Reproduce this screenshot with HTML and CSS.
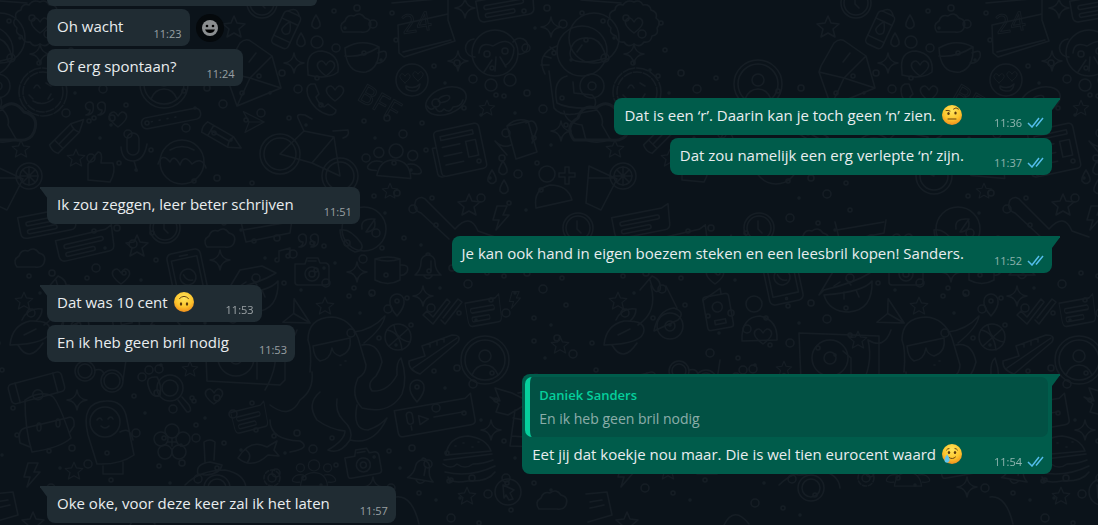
FILE: index.html
```html
<!DOCTYPE html>
<html lang="nl">
<head>
    <meta charset="UTF-8">
    <meta name="viewport" content="width=device-width, initial-scale=1.0">
    <title>Chat</title>
    <link rel="stylesheet" href="styles.css">
</head>
<body>
    <!-- Wallpaper -->
    <svg class="wallpaper" aria-hidden="true">
        <defs>
            <path id="star" d="M0-11L3-4L11-3L5 2L7 10L0 6L-7 10L-5 2L-11-3L-3-4Z"/>
            <path id="spark" d="M0-10Q1-1 10 0Q1 1 0 10Q-1 1-10 0Q-1-1 0-10Z"/>
            <path id="heart" d="M0 8Q-11 0-8-5Q-4-10 0-3Q4-10 8-5Q11 0 0 8Z"/>
            <path id="drop" d="M0-7Q5 1 4 4Q0 9-4 4Q-5 1 0-7Z"/>
            <path id="cloud" d="M-13 9Q-18 2-11-2Q-9-9-2-7Q4-12 9-5Q17-3 14 5Q12 10 5 9Z"/>
            <path id="bolt" d="M-4-12L6-12L2-3L8-3L-5 12L-2 2L-8 2Z"/>
            <path id="quotes" d="M-4-5a4 4 0 1 0-3 6q0 4-4 5q9 0 7-11M8-5a4 4 0 1 0-3 6q0 4-4 5q9 0 7-11"/>
            <path id="chat" d="M-29-10H22L29-13L27 6Q27 12 21 12H-23Q-29 12-29 6ZM-20-4H16a2 2 0 0 1 0 4H-20a2 2 0 0 1 0-4M-20 4H6a2 2 0 0 1 0 4H-20a2 2 0 0 1 0-4"/>
            <g id="camera">
                <path d="M-17-8H-7L-5-14H6L8-9H14Q17-8 17-5V10Q17 13 13 13H-14Q-17 13-17 10ZM-4-11H4"/>
                <circle cy="2" r="7"/><circle cy="2" r="3"/><circle cx="12" cy="-4" r="1"/>
            </g>
            <g id="avatar">
                <circle r="24"/><circle r="20"/><circle cy="-4" r="6"/>
                <path d="M-13 15Q-9 5 0 5T13 15"/>
            </g>
            <g id="clock"><circle r="15"/><circle r="12"/><path d="M-1-7V1L3 5"/></g>
            <g id="group">
                <circle cy="-12" r="7"/><circle cx="-17" cy="-9" r="5"/><circle cx="17" cy="-9" r="5"/>
                <path d="M-17 14Q-15-3 0-3T17 14ZM-18 9Q-30 10-26 4Q-22-2-13 0M18 9Q30 10 26 4Q22-2 13 0"/>
            </g>
            <path id="pencil" d="M-20-6H10L22 0L10 6H-20Q-23 0-20-6M-13-6V6M10-6Q7 0 10 6M-13 0H8"/>
            <path id="pin" d="M0 11Q-8 2-7-4A7 7 0 0 1 7-4Q8 2 0 11M2-4A2 2 0 1 1-2-4A2 2 0 1 1 2-4"/>
            <path id="bell" d="M-13 10Q-7 5-7-3A7 7 0 0 1 7-3Q7 5 13 10ZM-4 11Q0 16 4 11M-2-10a2 2 0 1 1 4 0M3-4V5"/>
            <path id="mug" d="M-13-11Q0-15 12-11V10Q0 17-13 10ZM-13-11Q0-7 12-11M12-5Q22-6 19 2Q16 6 12 5"/>
            <path id="plane" d="M-12-13L14 0L-10 13L-5 0ZM-5 0H14"/>
            <path id="ticks" d="M-18 2L-14-2L-8 4L6-14L9-11L-8 11ZM2 5L17-14L21-11L4 11L0 7"/>
            <path id="phone" d="M-12-15Q-18-13-15-3Q-9 12 6 16Q13 16 13 11L5 5L1 8Q-5 4-7-2L-4-5L-8-15Z"/>
            <g id="tablet">
                <rect x="-17" y="-26" width="34" height="52" rx="5"/><rect x="-13" y="-19" width="26" height="37"/>
                <circle r="8"/><path d="M-4-3Q-2 4 4 4M-4-22H4"/><circle cy="22" r="1"/>
            </g>
            <g id="rings">
                <circle cx="4" cy="6" r="2"/><circle cx="27" cy="3" r="3"/><circle cx="15" cy="23" r="1"/>
                <circle cx="43" cy="19" r="4"/><circle cx="62" cy="8" r="2"/><circle cx="66" cy="35" r="2"/>
                <circle cx="6" cy="43" r="4"/><circle cx="34" cy="48" r="2"/><circle cx="51" cy="55" r="1"/>
            </g>
            <g id="tile">
                <!-- scattered dots -->
                <use href="#rings" x="5" y="15"/><use href="#rings" x="60" y="70"/><use href="#rings" x="85" y="115"/>
                <use href="#rings" x="180" y="85"/><use href="#rings" x="255" y="70"/><use href="#rings" x="330" y="5"/>
                <use href="#rings" x="430" y="60"/><use href="#rings" x="500" y="90"/><use href="#rings" x="520" y="5"/>
                <use href="#rings" x="360" y="115"/><use href="#rings" x="475" y="155"/><use href="#rings" x="370" y="190"/>
                <use href="#rings" x="190" y="175"/><use href="#rings" x="90" y="225"/><use href="#rings" x="250" y="235"/>
                <use href="#rings" x="320" y="240"/><use href="#rings" x="25" y="270"/><use href="#rings" x="110" y="310"/>
                <use href="#rings" x="190" y="300"/><use href="#rings" x="345" y="290"/><use href="#rings" x="425" y="265"/>
                <use href="#rings" x="500" y="270"/><use href="#rings" x="530" y="335"/><use href="#rings" x="430" y="365"/>
                <use href="#rings" x="130" y="390"/><use href="#rings" x="190" y="395"/><use href="#rings" x="45" y="445"/>
                <use href="#rings" x="155" y="460"/><use href="#rings" x="385" y="445"/><use href="#rings" x="500" y="435"/>
                <use href="#rings" x="545" y="400"/><use href="#rings" x="445" y="475"/><use href="#rings" x="270" y="430"/>
                <!-- top band -->
                <path d="M40 2q6-3 9 3q7-1 8 5q7 2 5 8q6 4 1 10q2 7-5 8q-1 7-8 6q-4 6-10 2q-6 4-10-2q-7 1-8-6q-7-2-5-8q-6-5-1-10q-2-6 5-8q1-7 8-5q4-6 11-3Z"/>
                <use href="#heart" x="40" y="25"/>
                <path d="M-13 0L27 3M0 13A20 20 0 0 1 0 63M0 13A25 25 0 0 0 0 63"/>
                <use href="#spark" x="40" y="54"/><use href="#clock" x="262" y="3"/><use href="#star" x="234" y="27"/>
                <g transform="translate(287 28) rotate(25)"><rect x="-9" y="-16" width="18" height="36" rx="4"/><path d="M-9-7H9M-9 12H9M-6-16Q0-24 6-16"/><use href="#drop"/></g>
                <use href="#drop" x="316" y="22"/><use href="#drop" x="301" y="40"/><circle cx="317" cy="42" r="6"/>
                <path d="M308 72Q305 51 322 51Q340 54 338 72Q328 80 308 75Z"/><use href="#heart" x="326" y="68"/>
                <use href="#cloud" x="356" y="23"/>
                <path d="M345 48Q362 38 379 47Q380 68 366 72Q346 74 345 48ZM378 53Q388 48 386 57Q383 64 376 63M345 56Q362 58 379 47"/>
                <path d="M392 3L448-2V20L455 41L404 57L399 53L398 25L448 14M403 52L451 40"/>
                <text x="403" y="34" transform="rotate(-9 403 34)">24</text>
                <use href="#spark" x="465" y="8"/>
                <use href="#chat" transform="translate(506 6) rotate(-10)"/><use href="#spark" x="551" y="27"/>
                <!-- second band -->
                <g transform="translate(43 92)"><circle r="24" stroke-dasharray="12 2"/><circle r="20" stroke-dasharray="8 2"/><path d="M-9-4q3-6 6 0M3-9l5 3M8 2l-3 5M-10 9q10 6 20-2M-14 3l4 4"/></g>
                <use href="#cloud" transform="translate(6 122) scale(2)"/>
                <use href="#quotes" x="97" y="109"/><use href="#heart" x="118" y="119"/>
                <use href="#pencil" transform="translate(68 135) rotate(-45)"/>
                <path d="M127 139a6 6 0 0 1 12 0v10a6 6 0 0 1-12 0ZM121 147Q122 161 133 161T147 144M134 161L137 171"/>
                <use href="#avatar" x="164" y="84"/>
                <g transform="translate(171 118) rotate(-11)"><rect x="-30" y="-5" width="60" height="11" rx="5"/><path d="M-20 0h1M-12 0h1M-4 0h1M4 0h1"/></g>
                <use href="#pencil" transform="translate(222 137) rotate(30)"/>
                <path d="M227 66L240 43Q246 37 252 42L272 56L281 88L237 106L225 72ZM225 72L250 78L272 56M250 78L281 88M250 78L237 106M249 62L256 53"/>
                <use href="#spark" x="294" y="63"/><use href="#phone" x="323" y="99"/><use href="#heart" x="335" y="93"/>
                <use href="#plane" transform="translate(253 122) scale(.8)"/>
                <circle cx="280" cy="154" r="20"/><circle cx="280" cy="154" r="16"/><circle cx="340" cy="176" r="18"/><circle cx="340" cy="176" r="14"/>
                <path d="M280 154L304 131L334 137L312 163L280 154M304 131L298 118Q296 113 305 115L312 119M312 163L340 176L334 137M333 131L348 130Q350 136 343 138"/>
                <use href="#star" transform="translate(21 149) scale(.8)"/><use href="#star" transform="translate(76 158) scale(.8)"/>
                <circle cx="182" cy="162" r="22"/><path d="M158 164q4-12 12-2q4-9 10 3q4-12 12-1q10-8 14 4M170 150q12-7 24 0"/>
                <path d="M88 180V164L98 152Q103 152 101 163H113Q116 172 110 182Z"/>
                <circle cx="412" cy="80" r="16"/><use href="#heart" transform="translate(405 78) scale(.6)"/><use href="#heart" transform="translate(418 76) scale(.6)"/><path d="M406 86Q414 90 420 84Q419 92 412 91T406 86"/>
                <use href="#spark" x="458" y="61"/>
                <ellipse cx="446" cy="101" rx="21" ry="13" transform="rotate(-20 446 101)"/><ellipse cx="444" cy="99" rx="6" ry="3" transform="rotate(-20 444 99)"/><path d="M427 106q4 6 8 1q4 8 9 2q6 5 9-2q8 0 10-7"/>
                <circle cx="495" cy="53" r="23"/><path d="M475 57a9 9 0 1 1-1-18M513 42a8 8 0 1 1 5 12M479 53Q480 41 493 46Q508 36 514 48Q514 60 505 66M492 60l-8 12M496 57l-1 14M500 57l6 10"/><circle cx="487" cy="54" r="3"/><circle cx="505" cy="51" r="3"/>
                <circle cx="491" cy="85" r="6"/><circle cx="510" cy="80" r="6"/>
                <text x="356" y="99" transform="rotate(30 356 99)">BFF</text>
                <use href="#star" transform="translate(487 108) scale(.7)"/>
                <circle cx="582" cy="51" r="25"/><path d="M570 53Q572 37 588 38Q602 38 606 58Q588 64 576 61Q570 60 570 53M577 52l5-7M557 46Q535 54 545 74M555 51l-5-4M551 58l-7-2M549 65h-8M549 71L554 108Q560 116 575 114L597 110Q604 118 602 125L610 139Q598 145 586 140L582 125Q566 123 564 111M567 76Q552 80 557 103Q567 109 594 108Q598 100 592 95L574 93L573 82"/>
                <circle cx="592" cy="86" r="12"/><circle cx="592" cy="86" r="4"/>
                <!-- middle band -->
                <g transform="translate(459 149) rotate(-12)"><rect x="-22" y="-22" width="46" height="46" rx="4"/><path d="M-22-6H-26V20Q-26 24-20 24M-16-16H17v4H-16ZM-16-5H2M-16 4H2M-16 13H2M8-6H18V10H8Z"/></g>
                <path d="M507 126L528 121L537 152L516 159ZM507 126Q516 117 528 121M511 145Q503 149 495 141L507 155M526 123Q535 117 537 129L532 143"/>
                <use href="#spark" x="561" y="131"/><use href="#group" transform="translate(395 163) rotate(5)"/>
                <use href="#star" transform="translate(390 191) scale(.7)"/><use href="#star" x="469" y="205"/>
                <use href="#drop" x="492" y="177"/><use href="#drop" x="504" y="187"/><use href="#drop" x="503" y="168"/>
                <circle cx="547" cy="174" r="8"/><path d="M536 208Q533 189 550 185Q568 185 572 200ZM565 167v6h-6v4h6v7h4v-7h6v-4h-6v-6Z"/>
                <use href="#bolt" x="501" y="218"/>
                <path d="M416 200Q422 194 428 202L455 229Q470 212 478 231L495 237M416 200Q412 210 421 213L449 239"/>
                <g transform="translate(3 188)"><path d="M-8-22L20-9L4 22L-11 15ZM-9-10H17"/><circle cx="26" cy="-12" r="13"/><circle cx="26" cy="-12" r="9"/><path d="M26-21V-3M17-12H35M20-18L32-6M32-18L20-6"/></g>
                <use href="#clock" x="578" y="228"/>
                <use href="#chat" transform="translate(48 222) rotate(-11)"/><use href="#chat" transform="translate(86 244) rotate(-13)"/>
                <use href="#cloud" x="30" y="258"/><use href="#clock" x="165" y="228"/><use href="#cloud" x="220" y="238"/>
                <use href="#star" x="137" y="246"/><use href="#spark" x="220" y="260"/><use href="#heart" x="121" y="276"/>
                <use href="#tablet" transform="translate(188 277) rotate(-12)"/>
                <path d="M241 222L246 242L290 233L292 220M243 230L290 222M225 295L240 270L262 266L276 273Q260 283 230 290ZM230 295Q270 292 278 281Q279 310 255 312Q235 312 230 295M240 286l6-4M252 279l5 6M250 292v7M262 290l3 7"/>
                <use href="#quotes" x="310" y="241"/><path d="M279 260V251L290 248V256M279 260a2 2 0 1 1-2-2M290 256a2 2 0 1 1-2-2"/>
                <circle cx="364" cy="229" r="22"/><path d="M340 230Q350 228 361 243Q365 250 355 252Q341 246 340 230M362 229Q360 218 374 219Q378 231 366 232L375 219"/>
                <use href="#camera" x="312" y="272"/><use href="#spark" x="357" y="272"/><use href="#mug" x="388" y="270"/>
                <use href="#bell" x="428" y="265"/><use href="#star" transform="translate(24 301) scale(.8)"/>
                <!-- scooter, passport, turntable -->
                <path d="M10 345Q12 325 30 321Q50 320 50 330Q50 344 10 345M22 320Q28 307 42 309Q42 316 36 321M44 325Q64 312 57 286M72 286L83 308M60 331Q64 310 80 308Q92 312 84 320L60 331M24 335L36 329"/>
                <circle cx="76" cy="326" r="13"/><circle cx="76" cy="326" r="5"/><path d="M18 345Q29 364 43 343M46 290L58 276Q68 280 66 290Q60 296 56 280"/>
                <g transform="translate(124 311) rotate(-10)"><rect x="-13" y="-16" width="26" height="34" rx="3"/><path d="M-13-13L6-22V-16M-5 9H6v4H-5Z"/><circle cy="-4" r="5"/></g>
                <circle cx="160" cy="304" r="8"/><path d="M148 341Q147 317 166 316Q184 320 183 340Z"/><use href="#heart" x="169" y="336"/>
                <path d="M205 333L285 336V380L280 385L207 381Z"/><circle cx="236" cy="358" r="18"/><circle cx="236" cy="358" r="6"/><path d="M249 351L257 358V379"/>
                <use href="#star" transform="translate(264 340) scale(.8)"/><use href="#plane" transform="translate(298 316) rotate(30)"/><use href="#star" transform="translate(325 306) scale(.8)"/>
                <use href="#spark" x="423" y="296"/><use href="#pin" x="397" y="305"/><use href="#ticks" x="441" y="313"/>
                <use href="#chat" transform="translate(484 311) rotate(-10) scale(.6 1.1)"/><use href="#bolt" transform="translate(515 300) scale(.7)"/>
                <!-- octopus -->
                <path d="M310 372Q312 350 308 340Q308 318 332 317Q350 318 358 338L366 365M354 332Q372 330 385 316Q383 328 364 343M362 345Q378 342 382 362Q380 370 376 376Q366 384 372 391Q388 392 397 375Q396 362 401 358Q408 378 402 394Q390 415 362 408Q350 396 358 378Q366 374 366 365"/>
                <path d="M313 346L350 338Q352 352 340 356Q333 354 332 348Q330 360 320 361Q314 358 313 346M320 392Q306 404 317 420Q331 430 345 431Q345 440 328 450Q340 455 350 440Q354 430 343 420Q335 412 337 399M270 405Q290 420 300 400Q314 390 312 372M270 420Q270 440 300 441Q312 448 290 452M357 405Q352 430 368 430Q380 426 387 418Q374 446 350 440M265 390Q280 365 274 340Q290 350 297 330M345 361h1M340 365h1"/>
                <circle cx="398" cy="337" r="13"/><path d="M387 330Q400 332 402 350M394 325Q396 340 410 342M389 346L408 329"/>
                <path d="M409 361L425 356L422 346L452 335Q462 335 458 342L420 374Q408 370 409 361ZM413 368L457 338M430 343v4M437 341v4M444 338v4"/>
                <use href="#avatar" x="485" y="360"/><use href="#pin" transform="translate(417 391)"/>
                <g transform="translate(434 417) rotate(-10)"><path d="M-38-13H34L40-17V10Q40 14 35 14H-34Q-38 14-38 9ZM-27-6a3 3 0 0 1 6 0v6a3 3 0 0 1-6 0ZM-24 5V9M-15-4L-6 1L-15 5ZM0 0H31"/></g>
                <path d="M490 397L500 401L495 388L512 393L530 402L508 415L496 412L499 404ZM518 393L530 391L540 447L510 446L515 410M513 418L535 422M512 436L538 438"/>
                <use href="#spark" x="491" y="430"/><use href="#star" transform="translate(560 345) scale(.8)"/>
                <!-- bottom band -->
                <g transform="translate(36 388) rotate(-15)"><rect x="-27" y="-10" width="55" height="20" rx="4"/><path d="M-19-10V10M20-10V10"/><circle cy="7" r="5"/></g>
                <path d="M25 400Q40 390 52 396Q58 400 71 438Q60 448 32 452Q25 430 25 400M25 428L67 418M25 428Q17 430 20 443L30 447M67 418Q75 415 74 426L70 432"/><ellipse cx="39" cy="427" rx="2" ry="4"/><ellipse cx="58" cy="423" rx="2" ry="4"/>
                <use href="#spark" x="77" y="400"/>
                <circle cx="85" cy="371" r="10"/><circle cx="112" cy="381" r="11"/><circle cx="85" cy="371" r="7"/><circle cx="112" cy="381" r="8"/><path d="M95 370Q102 368 104 374M123 380L126 360"/>
                <path d="M88 435Q80 402 106 401Q122 400 126 415L134 455Q120 465 97 464ZM120 432Q130 426 133 440M103 466V474H123V462"/><circle cx="105" cy="422" r="15"/><path d="M97 420q3-4 5 0M108 419q3-4 5 0M101 426q4 4 8 0"/>
                <path d="M148 385Q146 376 157 377Q162 385 160 395Q152 400 148 385"/><circle cx="142" cy="377" r="4"/><circle cx="149" cy="370" r="4"/><circle cx="159" cy="369" r="4"/>
                <circle cx="170" cy="388" r="13"/><circle cx="170" cy="388" r="8"/><path d="M178 400L187 412Q193 412 189 405L182 397"/>
                <use href="#star" transform="translate(190 369) scale(.7)"/><use href="#heart" x="214" y="396"/>
                <use href="#chat" transform="translate(250 418) rotate(-14) scale(.6 1)"/>
                <g transform="translate(172 442)"><circle cy="-11" r="7"/><circle cx="11" cy="-3" r="7"/><circle cx="7" cy="10" r="7"/><circle cx="-7" cy="10" r="7"/><circle cx="-11" cy="-3" r="7"/><path d="M0-4V4M-4 0H4"/></g>
                <path d="M238 458Q250 438 267 447L277 441L274 450L279 456L268 455Q252 470 238 458M246 450Q253 455 247 463"/>
                <circle cx="272" cy="478" r="8" stroke-dasharray="4 2"/><circle cx="272" cy="478" r="4"/>
                <path d="M198 474Q195 464 210 462L222 465Q220 474 206 475ZM205 462L204 442Q210 438 215 442L214 460M185 485Q200 470 225 470Q245 474 246 488"/><circle cx="217" cy="488" r="13"/><circle cx="217" cy="488" r="9"/>
                <use href="#bolt" x="32" y="475"/><use href="#star" transform="translate(74 471) scale(.8)"/><use href="#star" x="33" y="523"/>
                <use href="#group" transform="translate(314 475) scale(.8)"/><use href="#camera" transform="translate(363 463) rotate(-10)"/>
                <use href="#spark" x="373" y="487"/><use href="#bell" transform="translate(422 470) rotate(10)"/>
                <path d="M446 455Q448 437 468 436Q486 438 491 451ZM444 460L492 454M443 464q8 6 14 0q8 6 16 0q10 0 20-4M445 472Q470 478 495 466M448 477Q450 484 468 481Q488 482 495 472M455 446h1M463 443h1M472 447h1M478 442h1"/>
                <circle cx="508" cy="492" r="13"/><path d="M503 485L514 490L510 493L513 499L509 500L506 495L504 498Z"/><use href="#star" transform="translate(467 496) scale(.8)"/>
                <path d="M-8 494L13 492L18 515L-6 522M-4 502L8 500M-4 508L10 505M396 497Q412 495 419 524M130 525Q140 505 155 524"/>
                <use href="#cloud" x="552" y="500"/><use href="#mug" x="570" y="455"/><use href="#heart" x="558" y="392"/>
            </g>
            <pattern id="doodles" width="594" height="525" patternUnits="userSpaceOnUse">
                <use href="#tile" x="-594"/><use href="#tile"/><use href="#tile" x="594"/>
            </pattern>
            <symbol id="read" viewBox="0 0 17 11">
                <path d="M1 6L5 10L12 1M9 9.500L16 1"/>
            </symbol>
            <radialGradient id="face" cx=".5" cy=".3" r=".72">
                <stop offset="0" stop-color="#ffe45c"/>
                <stop offset=".6" stop-color="#fdc52c"/>
                <stop offset="1" stop-color="#ee8b1c"/>
            </radialGradient>
        </defs>
        <rect width="100%" height="100%" fill="url(#doodles)"/>
    </svg>

    <main class="chat">
        <div class="row">
            <div class="bubble in previous"></div>
        </div>
        <div class="row">
            <div class="bubble in">
                <span class="text">Oh wacht</span>
                <span class="meta">11:23</span>
            </div>
            <button class="react" type="button" aria-label="Reageren">
                <svg viewBox="0 0 18 18" width="18" height="18">
                    <circle cx="9" cy="9" r="8" fill="#8b8e90"/>
                    <circle cx="6" cy="7" r="1.300"/>
                    <circle cx="12" cy="7" r="1.300"/>
                    <path d="M4 10.500H14Q12.500 14 9 14T4 10.500Z"/>
                </svg>
            </button>
        </div>
        <div class="row">
            <div class="bubble in">
                <span class="text">Of erg spontaan?</span>
                <span class="meta">11:24</span>
            </div>
        </div>

        <div class="row out-row first">
            <div class="bubble out tail">
                <span class="text">Dat is een ‘r’. Daarin kan je toch geen ‘n’ zien.
                    <svg class="emoji" viewBox="0 0 20 20" role="img" aria-label="opgetrokken wenkbrauw">
                        <circle cx="10" cy="10" r="10" fill="url(#face)"/>
                        <g fill="none" stroke="#6b4410" stroke-linecap="round">
                            <path d="M4 5.500Q6 5 8 6M11.500 4Q14 1.500 16.500 4M6 14H14"/>
                        </g>
                        <ellipse cx="6.500" cy="8.500" rx="1.200" ry="1.500" fill="#5a380d"/>
                        <ellipse cx="13.500" cy="8" rx="1.200" ry="1.500" fill="#5a380d"/>
                    </svg>
                </span>
                <span class="meta">11:36 <svg class="check" aria-hidden="true"><use href="#read"/></svg></span>
            </div>
        </div>
        <div class="row out-row">
            <div class="bubble out">
                <span class="text">Dat zou namelijk een erg verlepte ‘n’ zijn.</span>
                <span class="meta">11:37 <svg class="check" aria-hidden="true"><use href="#read"/></svg></span>
            </div>
        </div>

        <div class="row first">
            <div class="bubble in tail">
                <span class="text">Ik zou zeggen, leer beter schrijven</span>
                <span class="meta">11:51</span>
            </div>
        </div>

        <div class="row out-row first">
            <div class="bubble out tail">
                <span class="text">Je kan ook hand in eigen boezem steken en een leesbril kopen! Sanders.</span>
                <span class="meta">11:52 <svg class="check" aria-hidden="true"><use href="#read"/></svg></span>
            </div>
        </div>

        <div class="row first">
            <div class="bubble in tail">
                <span class="text">Dat was 10 cent
                    <svg class="emoji" viewBox="0 0 20 20" role="img" aria-label="omgekeerd gezicht">
                        <circle cx="10" cy="10" r="10" fill="url(#face)"/>
                        <path d="M5.500 6.500Q10 2 14.500 6.500" fill="none" stroke="#6b4410" stroke-linecap="round"/>
                        <ellipse cx="7" cy="12" rx="1.200" ry="1.700" fill="#5a380d"/>
                        <ellipse cx="13" cy="12" rx="1.200" ry="1.700" fill="#5a380d"/>
                    </svg>
                </span>
                <span class="meta">11:53</span>
            </div>
        </div>
        <div class="row">
            <div class="bubble in">
                <span class="text">En ik heb geen bril nodig</span>
                <span class="meta">11:53</span>
            </div>
        </div>

        <div class="row out-row first">
            <div class="bubble out tail with-quote">
                <blockquote class="quote">
                    <span class="quote-name">Daniek Sanders</span>
                    <span class="quote-text">En ik heb geen bril nodig</span>
                </blockquote>
                <span class="text">Eet jij dat koekje nou maar. Die is wel tien eurocent waard
                    <svg class="emoji" viewBox="0 0 20 20" role="img" aria-label="lachend met traan">
                        <circle cx="10" cy="10" r="10" fill="url(#face)"/>
                        <path d="M7 13.500Q10.500 16 13.500 13M4.500 6Q5.500 4.500 7 4.500M13 4.500Q14.500 4.500 15.500 6" fill="none" stroke="#6b4410" stroke-linecap="round"/>
                        <ellipse cx="7" cy="8.500" rx="1.200" ry="1.600" fill="#5a380d"/>
                        <ellipse cx="13" cy="8.500" rx="1.200" ry="1.600" fill="#5a380d"/>
                        <path d="M5 10.500Q8 14 7.500 16.500Q6 20 3 18Q1.500 15 5 10.500Z" fill="#5fc4ee"/>
                    </svg>
                </span>
                <span class="meta">11:54 <svg class="check" aria-hidden="true"><use href="#read"/></svg></span>
            </div>
        </div>

        <div class="row first">
            <div class="bubble in tail">
                <span class="text">Oke oke, voor deze keer zal ik het laten</span>
                <span class="meta">11:57</span>
            </div>
        </div>
    </main>
</body>
</html>
```
FILE: styles.css
```css
body {
    margin: 0;
    background-color: #0b131a;
    color: #e9edef;
    font-family: "Segoe UI", "Open Sans", "Noto Sans", sans-serif;
    font-size: 15px;
    overflow: hidden;
}

/* Doodle background behind the messages */
.wallpaper {
    position: fixed;
    left: 0;
    top: 0;
    width: 100%;
    height: 100%;
    z-index: -1;
}

#tile {
    fill: none;
    stroke: #151d24;
    stroke-width: 1.5;
    stroke-linecap: round;
    stroke-linejoin: round;
}

#tile text {
    font-size: 26px;
    stroke-width: 1;
}

/* Messages */
.chat {
    display: flex;
    flex-direction: column;
    gap: 3px;
    padding: 0 46px 0 47px;
}

.row {
    display: flex;
    align-items: center;
    gap: 6px;
}

.out-row {
    justify-content: flex-end;
}

.first {
    margin-top: 9px;
}

.bubble {
    position: relative;
    display: flex;
    column-gap: 30px;
    align-items: flex-end;
    padding: 0 8px 0 10px;
    border-radius: 8px;
}

.in {
    background-color: #202c33;
}

.out {
    background-color: #005c4b;
}

.previous {
    width: 252px;
    height: 6px;
    border-radius: 0 0 8px 8px;
}

/* Little corner next to the first message of a group */
.tail::before {
    content: "";
    position: absolute;
    top: 0;
    width: 16px;
    height: 12px;
}

.in.tail::before {
    left: -7px;
    background-color: #202c33;
    clip-path: polygon(0 0, 100% 0, 100% 100%, 50% 100%, 0 10%);
}

.out.tail::before {
    right: -8px;
    background-color: #005c4b;
    clip-path: polygon(0 0, 100% 0, 100% 10%, 50% 100%, 0 100%);
}

.text {
    padding: 6px 0 9px;
    line-height: 22px;
}

.meta {
    display: flex;
    align-items: center;
    gap: 5px;
    padding-bottom: 5px;
    color: rgba(233, 237, 239, 0.6);
    font-size: 11px;
    line-height: 15px;
}

.check {
    width: 17px;
    height: 11px;
    fill: none;
    stroke: #53bdeb;
    stroke-width: 1.5;
}

.emoji {
    width: 20px;
    height: 20px;
    margin: 0 2px;
    vertical-align: -4px;
}

.react {
    display: flex;
    align-items: center;
    justify-content: center;
    width: 28px;
    height: 28px;
    padding: 0;
    border: none;
    border-radius: 50%;
    background-color: #05090c;
    cursor: pointer;
}

/* Quoted message */
.with-quote {
    display: grid;
    grid-template-columns: 1fr auto;
}

.quote {
    position: relative; /* keeps it above the tail */
    display: flex;
    flex-direction: column;
    grid-column: 1 / -1;
    gap: 2px;
    margin: 3px -4px 0 -7px;
    padding: 7px 9px;
    border-left: 5px solid #06cf9c;
    border-radius: 7px;
    background-color: #025144;
    line-height: 22px;
}

.quote-name {
    color: #06cf9c;
    font-size: 13px;
    font-weight: 600;
}

.quote-text {
    color: rgba(233, 237, 239, 0.6);
    font-size: 14px;
}
```
